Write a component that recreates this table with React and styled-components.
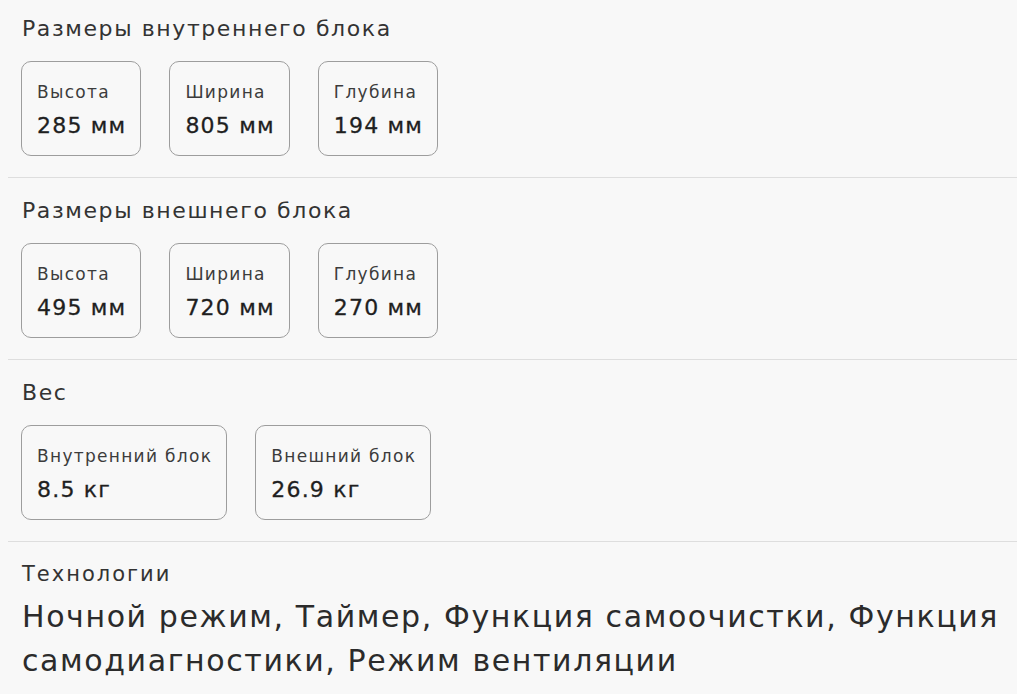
import React from "react";
import styled, { createGlobalStyle } from "styled-components";

const groups = [
  {
    title: "Размеры внутреннего блока",
    items: [
      { label: "Высота", value: "285 мм" },
      { label: "Ширина", value: "805 мм" },
      { label: "Глубина", value: "194 мм" },
    ],
  },
  {
    title: "Размеры внешнего блока",
    items: [
      { label: "Высота", value: "495 мм" },
      { label: "Ширина", value: "720 мм" },
      { label: "Глубина", value: "270 мм" },
    ],
  },
  {
    title: "Вес",
    items: [
      { label: "Внутренний блок", value: "8.5 кг" },
      { label: "Внешний блок", value: "26.9 кг" },
    ],
  },
];

export default function App() {
  return (
    <>
      <Global />
      <Page>
        {groups.map((group, i) => (
          <Section key={group.title} $first={i === 0}>
            <Title>{group.title}</Title>
            <Cards>
              {group.items.map((item) => (
                <Card key={item.label}>
                  <Label>{item.label}</Label>
                  <Value>{item.value}</Value>
                </Card>
              ))}
            </Cards>
          </Section>
        ))}
        <Section $last>
          <SmallTitle>Технологии</SmallTitle>
          <BigText>
            Ночной режим, Таймер, Функция самоочистки, Функция
            самодиагностики, Режим вентиляции
          </BigText>
        </Section>
      </Page>
    </>
  );
}

const Global = createGlobalStyle`
  html, body {
    margin: 0;
    background: #f8f8f8;
    font-family: "DejaVu Sans", "Noto Sans", sans-serif;
    color: #2b2b2b;
  }
`;

const Page = styled.div`
  padding-left: 8px;
  overflow: hidden;
  height: 694px;
`;

const Section = styled.section`
  padding: ${(p) => (p.$first ? "16px" : "20px")} ${(p) => (p.$last ? "0" : "14px")}
    ${(p) => (p.$last ? "0" : "21px")} 14px;
  border-bottom: ${(p) => (p.$last ? "none" : "1px solid #dedede")};
`;

const Title = styled.h2`
  margin: 0 0 19px;
  font-size: 22px;
  line-height: 26px;
  font-weight: 400;
  letter-spacing: 1.6px;
  color: #333333;
`;

const Cards = styled.div`
  display: flex;
  gap: 28px;
  margin-left: -1px;
`;

const Card = styled.div`
  padding: 19px 14px 15px 15px;
  border: 1px solid #9d9d9d;
  border-radius: 10px;
  display: flex;
  flex-direction: column;
  gap: 9px;
`;

const Label = styled.div`
  font-size: 17px;
  line-height: 22px;
  letter-spacing: 1.3px;
  color: #3c3c3c;
`;

const Value = styled.div`
  font-size: 22px;
  line-height: 28px;
  letter-spacing: 1.2px;
  color: #1f1f1f;
  -webkit-text-stroke: 0.3px #1f1f1f;
`;

const SmallTitle = styled.div`
  margin: 0 0 9px;
  font-size: 21px;
  line-height: 24px;
  letter-spacing: 2px;
  color: #333333;
`;

const BigText = styled.p`
  margin: 0;
  font-size: 30px;
  line-height: 44px;
  letter-spacing: 1.6px;
  color: #2b2b2b;
`;
